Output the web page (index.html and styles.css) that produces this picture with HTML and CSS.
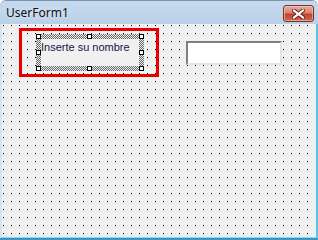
FILE: index.html
```html
<!DOCTYPE html>
<html lang="es">
<head>
    <meta charset="UTF-8">
    <title>UserForm1</title>
    <link rel="stylesheet" href="styles.css">
</head>
<body>
    <div class="window">
        <div class="titlebar">
            <span class="title">UserForm1</span>
            <button class="close-button" aria-label="Cerrar">
                <svg width="13" height="10" viewBox="0 0 13 10">
                    <path d="M2 1.5 L11 8.5 M11 1.5 L2 8.5" stroke="#5a1c14" stroke-width="4" stroke-linecap="square" fill="none" />
                    <path d="M2 1.5 L11 8.5 M11 1.5 L2 8.5" stroke="#ffffff" stroke-width="2.2" stroke-linecap="square" fill="none" />
                </svg>
            </button>
        </div>
        <div class="frame">
            <div class="client">
                <div class="highlight">
                    <div class="selection">
                        <div class="label">Inserte su nombre</div>
                        <span class="handle top left"></span>
                        <span class="handle top center"></span>
                        <span class="handle top right"></span>
                        <span class="handle middle left"></span>
                        <span class="handle middle right"></span>
                        <span class="handle bottom left"></span>
                        <span class="handle bottom center"></span>
                        <span class="handle bottom right"></span>
                    </div>
                </div>
                <div class="textbox"></div>
            </div>
        </div>
    </div>
</body>
</html>
```

FILE: styles.css
```css
body {
    margin: 0;
    width: 318px;
    height: 240px;
    overflow: hidden;
    font-family: 'Liberation Sans', Arial, sans-serif;
}

.window {
    width: 318px;
    height: 240px;
    display: flex;
    flex-direction: column;
    box-sizing: border-box;
    border-top: 1px solid #7d93aa;
    border-radius: 6px 6px 0 0;
    background: #bdd3eb;
    overflow: hidden;
}

.titlebar {
    height: 23px;
    flex-shrink: 0;
    display: flex;
    align-items: flex-start;
    justify-content: space-between;
    padding: 0 4px 0 6px;
    background: linear-gradient(#c6daef, #b9d0e9);
}

.title {
    margin-top: 3px;
    font-family: 'Noto Sans', 'Open Sans', sans-serif;
    font-size: 12px;
    line-height: 17px;
    color: #111;
    text-shadow: 0 0 6px rgba(255, 255, 255, 0.8);
}

.close-button {
    margin-top: 4px;
    width: 31px;
    height: 17px;
    padding: 0;
    display: flex;
    align-items: center;
    justify-content: center;
    border: 1px solid #74332a;
    border-radius: 3px;
    background: linear-gradient(#e6ada0 0%, #d98371 45%, #c4412c 55%, #cf6a52 100%);
    box-shadow: inset 0 0 0 1px rgba(255, 220, 210, 0.5);
}

.close-button svg {
    display: block;
}

.frame {
    flex: 1;
    display: flex;
    border-left: 2px solid #d5e3f1;
    border-right: 2px solid #5ac4ea;
    border-bottom: 1px solid #84d4f0;
    box-shadow: 0 2px 0 #3d95c4;
    margin-bottom: 2px;
}

/* VBA designer grid: one black dot every 8px */
.client {
    flex: 1;
    display: flex;
    align-items: flex-start;
    border-right: 1px solid #e6eef6;
    background-color: #f0f0f0;
    background-image:
        linear-gradient(90deg, #f0f0f0 7px, transparent 7px),
        linear-gradient(#f0f0f0 7px, #000 7px);
    background-size: 8px 8px;
    background-position: 2px 2px;
}

.highlight {
    margin: 4px 0 0 17px;
    width: 120px;
    height: 40px;
    padding: 3px 0 0 14px;
    border: 3px solid #e80000;
}

.selection {
    position: relative;
    width: 98px;
    height: 27px;
    padding: 5px;
    background: repeating-conic-gradient(#6a6a6a 0 25%, #ececec 0 50%) 0 0 / 2px 2px;
}

.label {
    height: 27px;
    background: #f0f0f0;
    font-size: 11px;
    line-height: 14px;
    padding-top: 1px;
    box-sizing: border-box;
    color: #14144a;
    white-space: nowrap;
}

.handle {
    position: absolute;
    width: 3px;
    height: 3px;
    border: 1px solid #000;
    background: #fff;
}

.handle.top { top: 0; }
.handle.middle { top: 16px; }
.handle.bottom { bottom: 0; }
.handle.left { left: 0; }
.handle.center { left: 51px; }
.handle.right { right: 0; }

.textbox {
    margin: 17px 0 0 27px;
    width: 92px;
    height: 20px;
    background: #fff;
    border: 2px solid;
    border-color: #7f7f7f #e3e3e3 #e3e3e3 #7f7f7f;
}
```
